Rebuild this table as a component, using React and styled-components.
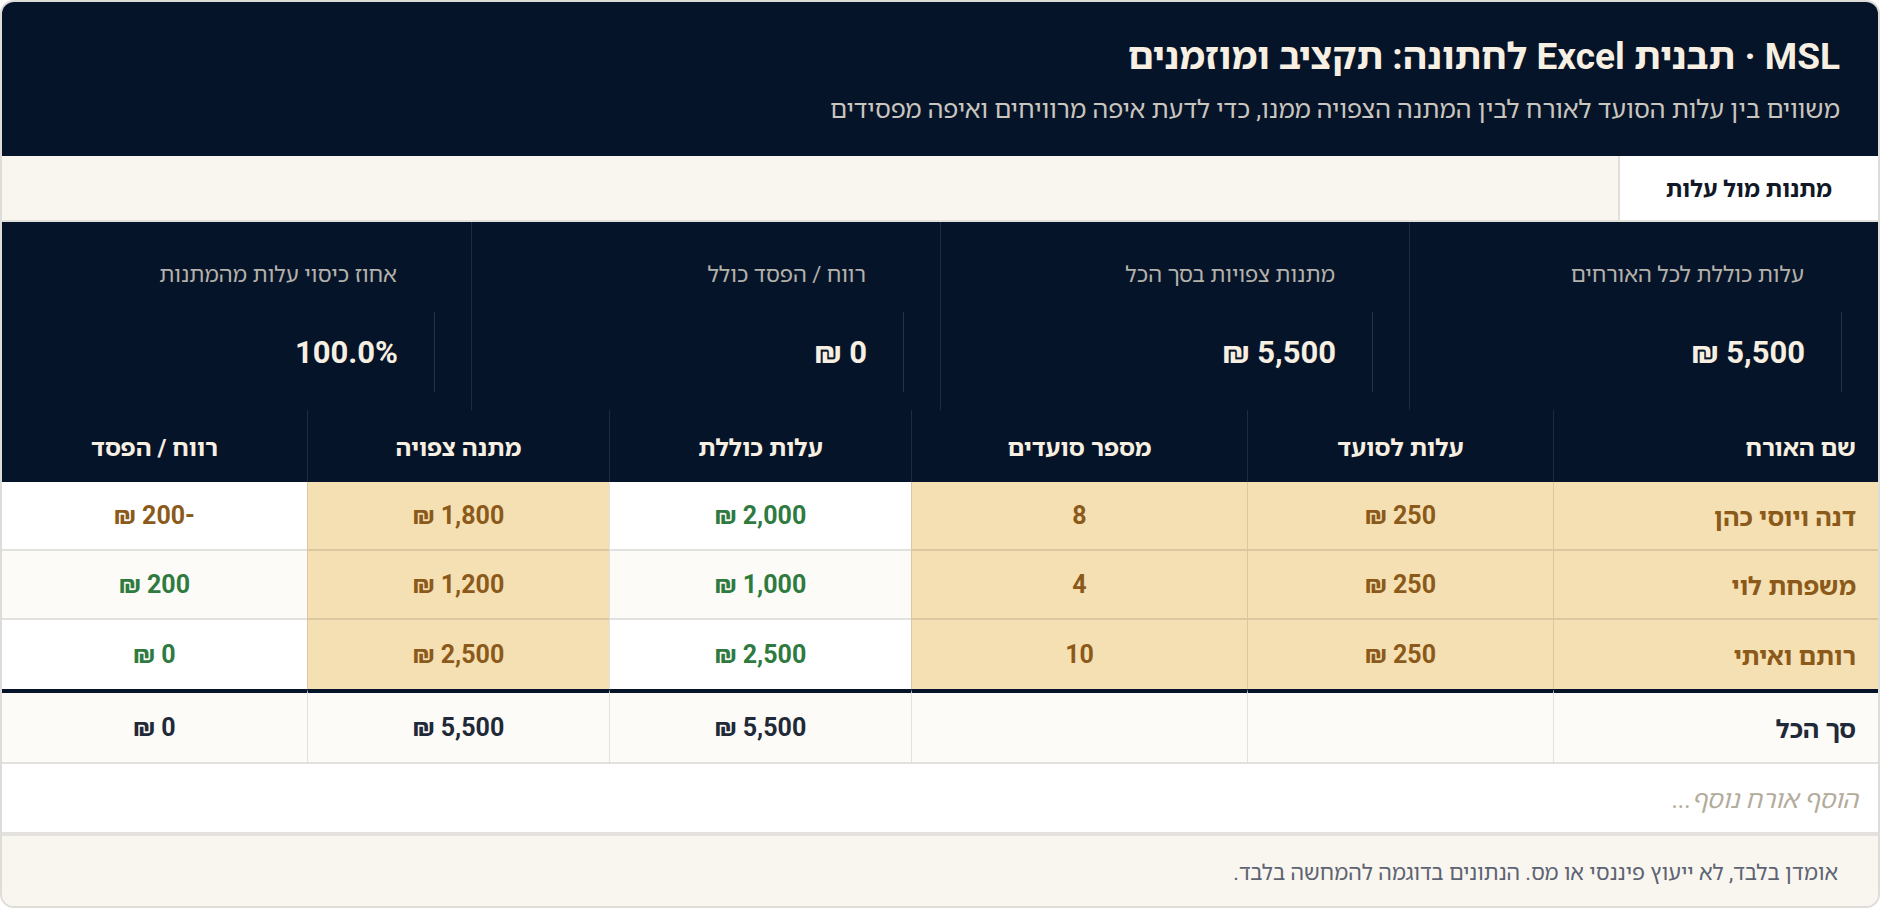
import React from "react";
import styled, { createGlobalStyle } from "styled-components";

const GlobalStyle = createGlobalStyle`
  * {
    margin: 0;
    padding: 0;
    box-sizing: border-box;
  }
  html, body {
    background: #ffffff;
    font-family: Roboto, "Noto Sans Hebrew", "Noto Sans", sans-serif;
  }
`;

const NAVY = "#061429";
const CREAM = "#f6efe2";

const stats = [
  { label: "עלות כוללת לכל האורחים", value: "5,500 ₪" },
  { label: "מתנות צפויות בסך הכל", value: "5,500 ₪" },
  { label: "רווח / הפסד כולל", value: "0 ₪" },
  { label: "אחוז כיסוי עלות מהמתנות", value: "100.0%" },
];

const columns = [
  { title: "שם האורח", width: 325, align: "right" },
  { title: "עלות לסועד", width: 306 },
  { title: "מספר סועדים", width: 336 },
  { title: "עלות כוללת", width: 302 },
  { title: "מתנה צפויה", width: 302 },
  { title: "רווח / הפסד", width: 305 },
];

const guests = [
  { name: "דנה ויוסי כהן", perSeat: "250 ₪", seats: "8", total: "2,000 ₪", gift: "1,800 ₪", diff: "-200 ₪", loss: true },
  { name: "משפחת לוי", perSeat: "250 ₪", seats: "4", total: "1,000 ₪", gift: "1,200 ₪", diff: "200 ₪" },
  { name: "רותם ואיתי", perSeat: "250 ₪", seats: "10", total: "2,500 ₪", gift: "2,500 ₪", diff: "0 ₪" },
];

const App = () => {
  return (
    <>
      <GlobalStyle />
      <Card dir="rtl">
        <Header>
          <Title>MSL · תבנית Excel לחתונה: תקציב ומוזמנים</Title>
          <Subtitle>
            משווים בין עלות הסועד לאורח לבין המתנה הצפויה ממנו, כדי לדעת איפה מרוויחים ואיפה מפסידים
          </Subtitle>
        </Header>

        <TabBar>
          <Tab $active>מתנות מול עלות</Tab>
        </TabBar>

        <Stats>
          {stats.map((s) => (
            <Stat key={s.label}>
              <StatLabel>{s.label}</StatLabel>
              <StatValue>{s.value}</StatValue>
            </Stat>
          ))}
        </Stats>

        <Table>
          <colgroup>
            {columns.map((c) => (
              <Col key={c.title} $w={c.width} />
            ))}
          </colgroup>
          <thead>
            <tr>
              {columns.map((c) => (
                <Th key={c.title} $align={c.align}>
                  {c.title}
                </Th>
              ))}
            </tr>
          </thead>
          <tbody>
            {guests.map((g, i) => (
              <tr key={g.name}>
                <Td $tone="input" $label>{g.name}</Td>
                <Td $tone="input">{g.perSeat}</Td>
                <Td $tone="input">{g.seats}</Td>
                <Td $tone="calc" $alt={i % 2 === 1}>{g.total}</Td>
                <Td $tone="input">{g.gift}</Td>
                <Td $tone={g.loss ? "loss" : "calc"} $alt={i % 2 === 1}>{g.diff}</Td>
              </tr>
            ))}
            <tr>
              <TotalTd $label>סך הכל</TotalTd>
              <TotalTd />
              <TotalTd />
              <TotalTd>5,500 ₪</TotalTd>
              <TotalTd>5,500 ₪</TotalTd>
              <TotalTd>0 ₪</TotalTd>
            </tr>
          </tbody>
        </Table>

        <AddRow>הוסף אורח נוסף...</AddRow>

        <Footer>אומדן בלבד, לא ייעוץ פיננסי או מס. הנתונים בדוגמה להמחשה בלבד.</Footer>
      </Card>
    </>
  );
};

export default App;

const Card = styled.div`
  width: 1880px;
  height: 908px;
  border: 2px solid #dddcd9;
  border-radius: 14px;
  overflow: hidden;
  background: #ffffff;
  display: flex;
  flex-direction: column;
`;

const Header = styled.header`
  background: ${NAVY};
  height: 154px;
  padding: 34px 38px 0;
  display: flex;
  flex-direction: column;
  gap: 17px;
`;

const Title = styled.h1`
  font-size: 37px;
  line-height: 42px;
  font-weight: 700;
  color: ${CREAM};
`;

const Subtitle = styled.p`
  font-size: 25px;
  line-height: 30px;
  color: #c9c5bf;
`;

const TabBar = styled.nav`
  height: 66px;
  background: #f9f6ef;
  border-bottom: 2px solid #e2e0dc;
  display: flex;
`;

const Tab = styled.div`
  height: 100%;
  padding: 0 46px;
  display: flex;
  align-items: center;
  font-size: 23px;
  font-weight: 700;
  color: #111827;
  background: ${(p) => (p.$active ? "#ffffff" : "transparent")};
  border-left: 2px solid #e2dfd8;
`;

const Stats = styled.section`
  height: 188px;
  background: ${NAVY};
  display: grid;
  grid-template-columns: repeat(4, 1fr);
`;

const Stat = styled.div`
  padding: 39px 36px 18px;
  border-left: 1px solid #1d2a41;
  display: flex;
  flex-direction: column;
  gap: 23px;

  &:last-child {
    border-left: none;
  }
`;

const StatLabel = styled.div`
  padding-right: 38px;
  font-size: 22px;
  line-height: 28px;
  color: #b4b1ab;
`;

const StatValue = styled.div`
  height: 80px;
  padding-right: 36px;
  border-right: 1px solid #25324a;
  display: flex;
  align-items: center;
  font-size: 31px;
  font-weight: 700;
  color: ${CREAM};
`;

const Table = styled.table`
  width: 100%;
  table-layout: fixed;
  border-collapse: separate;
  border-spacing: 0;
`;

const Col = styled.col`
  width: ${(p) => p.$w}px;
`;

const Th = styled.th`
  height: 72px;
  padding: 0 22px;
  background: ${NAVY};
  color: ${CREAM};
  font-size: 24px;
  font-weight: 700;
  text-align: ${(p) => p.$align || "center"};
  border-left: 1px solid #1d2a41;

  &:last-child {
    border-left: none;
  }
`;

const tones = {
  input: { bg: "#f5e0b3", color: "#8b5a1b", line: "#dcc8a0" },
  calc: { bg: "#ffffff", color: "#2f7a3f", line: "#e2e1df" },
  loss: { bg: "#ffffff", color: "#8b5a1b", line: "#e2e1df" },
};

const Td = styled.td`
  height: 69px;
  padding: 0 22px;
  font-size: 25px;
  font-weight: 700;
  text-align: ${(p) => (p.$label ? "right" : "center")};
  color: ${(p) => tones[p.$tone].color};
  background: ${(p) => (p.$alt && p.$tone !== "input" ? "#fcfbf8" : tones[p.$tone].bg)};
  border-bottom: 2px solid ${(p) => tones[p.$tone].line};
  border-left: 1px solid ${(p) => tones[p.$tone].line};

  tr:nth-child(3) > & {
    border-bottom: none;
  }

  &:last-child {
    border-left: none;
  }
`;

const TotalTd = styled.td`
  height: 75px;
  padding: 0 22px;
  font-size: 25px;
  font-weight: 700;
  color: #1f2937;
  background: #fcfbf8;
  text-align: ${(p) => (p.$label ? "right" : "center")};
  border-top: 4px solid ${NAVY};
  border-bottom: 2px solid #e2e1df;
  border-left: 1px solid #e2e1df;

  &:last-child {
    border-left: none;
  }
`;

const AddRow = styled.div`
  height: 72px;
  padding: 0 20px;
  display: flex;
  align-items: center;
  border-bottom: 4px solid #e4e2de;
  font-size: 25px;
  font-style: italic;
  color: #b3ab9c;
`;

const Footer = styled.footer`
  flex: 1;
  padding: 0 40px;
  display: flex;
  align-items: center;
  background: #f9f6ef;
  font-size: 21.5px;
  color: #5d6372;
`;
